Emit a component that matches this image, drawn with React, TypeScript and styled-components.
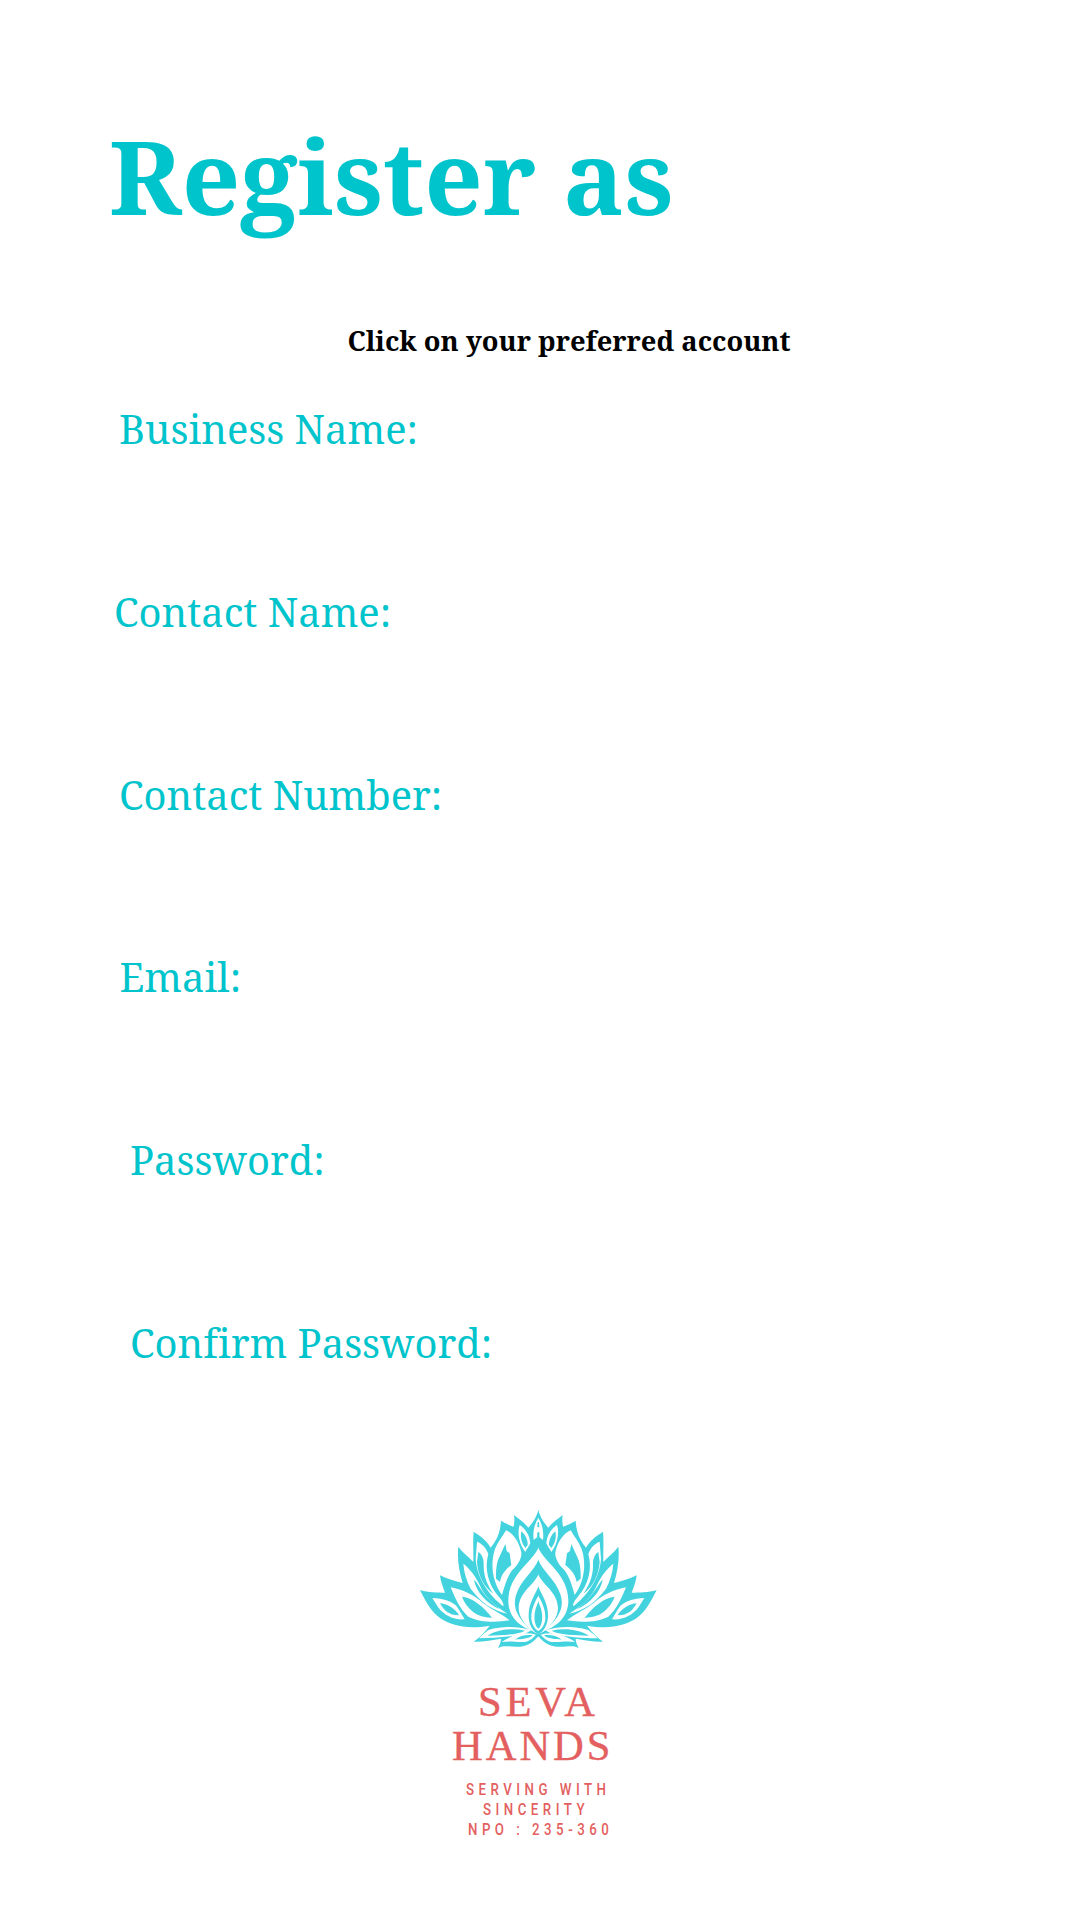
import React from "react";
import styled, { createGlobalStyle } from "styled-components";

const GlobalStyle = createGlobalStyle`
  * { box-sizing: border-box; }
  body { margin: 0; background: #ffffff; }
`;

const Screen = styled.main`
  display: flex;
  flex-direction: column;
  width: 1080px;
  height: 1920px;
  padding-top: 96px;
  overflow: hidden;
  background: #ffffff;
  color: #00c4cc;
  font-family: "Noto Serif", "Droid Serif", "DejaVu Serif", serif;
  font-variant-ligatures: none;
`;

const Title = styled.h1`
  margin: 0 0 0 109px;
  height: 160px;
  font-size: 102.3px;
  line-height: 160px;
  font-weight: 700;
  white-space: nowrap;
`;

const Hint = styled.p`
  margin: 65px 0 0 347.5px;
  height: 40px;
  color: #000000;
  font-size: 27.3px;
  line-height: 40px;
  font-weight: 700;
  white-space: nowrap;
`;

const Fields = styled.form`
  display: grid;
  grid-auto-rows: 182.7px;
  margin-top: 40.2px;
`;

const Label = styled.label<{ $indent: number }>`
  padding-left: ${(p) => p.$indent}px;
  font-size: 39.9px;
  line-height: 56px;
  white-space: nowrap;
`;

const Brand = styled.footer`
  display: flex;
  flex-direction: column;
  width: 260px;
  margin: 2.6px 0 0 410px;
  color: #e35f60;
`;

const Lotus = styled.svg`
  display: block;
  width: 260px;
  height: 160px;
`;

const NameBlock = styled.div`
  display: flex;
  flex-direction: column;
  margin-top: 20px;
`;

const BrandName = styled.div<{ $spacing: number; $indent: number }>`
  height: 44.5px;
  padding-left: ${(p) => p.$indent}px;
  font-family: "Liberation Serif", serif;
  font-size: 42.5px;
  line-height: 44.5px;
  letter-spacing: ${(p) => p.$spacing}px;
  -webkit-text-stroke: 0.4px #e35f60;
  white-space: nowrap;
`;

const Tagline = styled.div`
  margin-top: 11px;
`;

const TagRow = styled.div<{ $indent: number }>`
  height: 20px;
  margin-left: ${(p) => p.$indent}px;
  font-family: Roboto, sans-serif;
  font-size: 16px;
  font-weight: 500;
  line-height: 20px;
  letter-spacing: 5.4px;
  white-space: nowrap;
  transform: scaleX(0.83);
  transform-origin: left center;
`;

const fields = [
  { text: "Business Name:", indent: 119 },
  { text: "Contact Name:", indent: 114 },
  { text: "Contact Number:", indent: 119 },
  { text: "Email:", indent: 119.5 },
  { text: "Password:", indent: 130 },
  { text: "Confirm Password:", indent: 130 },
];

const TEAL = "#43d3df";

function Petals() {
  return (
    <g>
      <path
        fill={TEAL}
        d="M386 30 C379 50 370 68 355 83 C344 69 330 59 312 45 C314 58 313 68 311 80 C298 75 285 70 273 62 C271 95 262 119 242 143 C231 122 211 108 191 95 C188 126 191 155 190 186 C176 170 158 158 145 140 C141 175 147 214 158 249 C135 243 112 237 90 226 C92 246 99 261 105 278 C82 278 56 278 30 270 C47 304 62 333 91 355 C127 379 174 388 239 377 C224 397 208 413 191 425 C219 426 247 420 273 416 C273 427 268 435 264 444 C283 434 302 442 330 440 C355 438 371 425 386 408 Z"
      />
      <g fill="#fff">
        <path d="M386 52 C373 72 368 95 371 120 C377 114 382 111 386 110 Z" />
        <path d="M329 75 C346 86 359 105 361 130 C357 139 350 148 346 156 C330 136 320 102 329 75 Z" />
        <path d="M288 91 C311 101 326 126 333 153 C338 169 326 193 307 210 C294 226 284 254 276 285 C249 249 239 195 255 147 C264 125 278 109 288 91 Z" />
        <path d="M201 125 C217 131 229 144 235 162 C223 205 233 253 267 291 C276 302 282 310 280 319 C242 290 201 239 197 177 Z" />
        <path d="M160 191 C181 207 197 230 209 255 C221 286 250 315 292 341 C246 332 210 304 182 266 C170 243 162 218 160 191 Z" />
        <path d="M122 262 C157 268 193 285 220 310 C245 329 275 342 299 361 C258 368 211 368 175 350 C151 330 136 296 122 262 Z" />
        <path d="M67 294 C97 295 129 303 143 323 C151 335 158 347 164 358 C132 361 101 345 84 321 Z" />
        <path d="M386 141 C367 188 297 221 295 300 C294 348 325 377 369 394 C333 365 303 329 319 283 C333 240 370 217 386 178 Z" />
        <path d="M386 222 C370 258 328 275 326 324 C326 353 348 378 371 396 L386 402 Z" />
        <path d="M362 390 C315 375 263 381 235 390 C224 399 214 406 207 415 C250 414 303 411 342 401 C352 398 359 395 362 390 Z" />
        <path d="M378 404 C341 393 304 406 275 426 C303 421 320 428 345 426 C360 423 369 413 378 404 Z" />
      </g>
      <g fill={TEAL}>
        <path d="M383 66 H386 V82 H382 Z M382 97 H386 V122 H381 Z" />
        <path d="M334 94 C347 105 354 122 353 135 L346 144 C335 130 330 112 334 94 Z" />
        <path d="M286 132 L290 153 L299 160 L304 195 C284 211 273 227 270 246 L258 236 C257 208 261 186 267 173 Z" />
        <path d="M205 156 C217 164 222 178 221 198 C221 232 235 260 250 281 C222 262 203 224 201 186 Z" />
        <path d="M192 239 C205 249 216 281 249 309 C256 316 264 322 269 328 C229 308 199 277 192 239 Z" />
        <path d="M156 290 C190 294 220 320 246 353 C203 354 170 328 156 290 Z" />
        <path d="M90 310 C109 310 136 326 147 346 C120 347 101 332 90 310 Z" />
        <path d="M386 257 C375 286 357 306 356 342 C355 366 363 384 374 395 L386 403 Z" />
        <path d="M233 407 C261 389 306 383 345 392 C323 405 275 405 233 407 Z" />
        <path d="M315 419 C330 406 350 404 368 406 C356 417 335 417 315 419 Z" />
      </g>
      <path
        fill="#fff"
        d="M386 286 C373 309 363 329 364 355 C365 374 374 387 386 394 L386 387 C373 377 370 350 377 326 C380 317 384 309 386 301 Z"
      />
    </g>
  );
}

export default function App() {
  return (
    <>
      <GlobalStyle />
      <Screen>
        <Title>Register as</Title>
        <Hint>Click on your preferred account</Hint>
        <Fields>
          {fields.map((f) => (
            <Label key={f.text} $indent={f.indent}>
              {f.text}
            </Label>
          ))}
        </Fields>
        <Brand>
          <Lotus viewBox="0 0 780 480" aria-hidden="true">
            <Petals />
            <g transform="translate(770 0) scale(-1 1)">
              <Petals />
            </g>
          </Lotus>
          <NameBlock>
            <BrandName $spacing={3.8} $indent={68}>SEVA</BrandName>
            <BrandName $spacing={3} $indent={42}>HANDS</BrandName>
          </NameBlock>
          <Tagline>
            <TagRow $indent={56}>SERVING WITH</TagRow>
            <TagRow $indent={73}>SINCERITY</TagRow>
            <TagRow $indent={58}>NPO : 235-360</TagRow>
          </Tagline>
        </Brand>
      </Screen>
    </>
  );
}
